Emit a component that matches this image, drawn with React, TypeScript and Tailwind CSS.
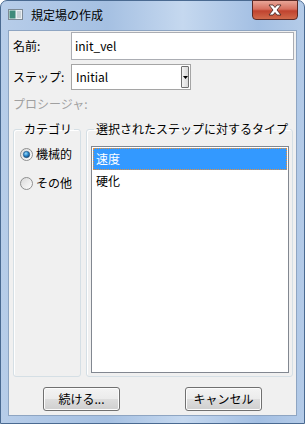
import React from 'react'

const font = "font-['Noto_Sans_CJK_JP','Noto_Sans',sans-serif]"

function Radio ({ checked }: { checked?: boolean }) {
  return (
    <svg width="13" height="13" viewBox="0 0 13 13">
      <defs>
        <linearGradient id="rf" x1="0" y1="0" x2="1" y2="1">
          <stop offset="0" stopColor="#d8d8d8" />
          <stop offset="1" stopColor="#ffffff" />
        </linearGradient>
        <radialGradient id="rd" cx="0.4" cy="0.35" r="0.7">
          <stop offset="0" stopColor="#9fdcf7" />
          <stop offset="0.5" stopColor="#2a8ad0" />
          <stop offset="1" stopColor="#0f3e6a" />
        </radialGradient>
      </defs>
      <circle cx="6.5" cy="6.5" r="6" fill="url(#rf)" stroke="#8e8f8f" />
      {checked && <circle cx="6.5" cy="6.5" r="3.2" fill="url(#rd)" stroke="#244f7a" strokeWidth="0.6" />}
    </svg>
  )
}

function WinButton ({ label }: { label: string }) {
  return (
    <button className="w-[77px] h-[24px] rounded-[3px] border border-[#707070] bg-[linear-gradient(to_bottom,#f3f3f3_0%,#ebebeb_50%,#dddddd_51%,#cfcfcf_100%)] shadow-[inset_0_0_0_1px_#fcfcfc] text-[12px] leading-[16px] text-black">
      {label}
    </button>
  )
}

export default function App () {
  return (
    <div className={`w-[305px] h-[424px] ${font} text-[12px] leading-[16px] text-black`}>
      <div className="flex flex-col h-[424px] rounded-t-[7px] border border-[#4a6a91] bg-[linear-gradient(to_right,#b7cde9_0%,#a5c0e2_35%,#c5d8ef_60%,#a3bfe3_85%,#b4cbe8_100%)]">
        {/* title bar */}
        <div className="relative flex items-center h-[29px] pl-[7px]">
          <svg width="15" height="11" viewBox="0 0 15 11" className="mt-[-2px]">
            <rect x="0.5" y="0.5" width="14" height="10" fill="#e9eef2" stroke="#7d8a96" />
            <rect x="1.5" y="1.5" width="6" height="8" fill="#3f8b7a" />
            <rect x="9" y="2" width="4" height="7" fill="#c9d2d8" />
          </svg>
          <span className="ml-[8px] mt-[-2px] text-[12px]">規定場の作成</span>
          <div className="absolute top-[-1px] right-[6px] w-[46px] h-[20px] rounded-b-[4px] border border-[#5b2a26] bg-[linear-gradient(to_bottom,#e8a597_0%,#d6705f_45%,#c0432f_55%,#d06a4b_100%)] flex items-center justify-center">
            <svg width="14" height="12" viewBox="0 0 14 12">
              <path d="M1 1 L5 1 L7 3.5 L9 1 L13 1 L9 6 L13 11 L9 11 L7 8.5 L5 11 L1 11 L5 6 Z" fill="#ffffff" stroke="#3b1e1a" strokeWidth="0.8" strokeLinejoin="round" />
            </svg>
          </div>
        </div>

        {/* client area */}
        <div className="mx-[7px] h-[386px] border border-[#8ea5c2] bg-[#f0f0f0] pl-[4px] pt-[1px]">
          <div className="flex items-center h-[28px]">
            <span className="w-[58px]">名前:</span>
            <div className="w-[223px] h-[28px] border border-[#abadb3] bg-white flex items-center pl-[3px]">init_vel</div>
          </div>
          <div className="flex items-center h-[26px] mt-[4px]">
            <span className="w-[58px]">ステップ:</span>
            <div className="w-[120px] h-[26px] border border-[#a5a5a5] bg-white flex items-center justify-between pl-[4px] pr-[1px]">
              <span>Initial</span>
              <div className="w-[8px] h-[22px] border border-[#6f6f6f] rounded-[1px] bg-[linear-gradient(to_right,#f4f4f4,#d9d9d9)] flex items-center justify-center">
                <svg width="5" height="3" viewBox="0 0 5 3"><path d="M0 0 L5 0 L2.5 3 Z" fill="#000" /></svg>
              </div>
            </div>
          </div>
          <div className="mt-[6px] h-[16px] text-[#a0a0a0]">プロシージャ:</div>

          <div className="flex gap-[5px] mt-[9px]">
            <fieldset className="w-[68px] h-[256px] border border-[#d5dfe5] rounded-[3px] shadow-[inset_1px_1px_0_#ffffff]">
              <legend className="ml-[8px] px-[2px] leading-[16px]">カテゴリ</legend>
              <div className="flex items-center h-[16px] mt-[9px] ml-[6px]">
                <Radio checked />
                <span className="ml-[3px]">機械的</span>
              </div>
              <div className="flex items-center h-[16px] mt-[13px] ml-[6px]">
                <Radio />
                <span className="ml-[3px]">その他</span>
              </div>
            </fieldset>
            <fieldset className="w-[207px] h-[256px] border border-[#d5dfe5] rounded-[3px] shadow-[inset_1px_1px_0_#ffffff]">
              <legend className="ml-[7px] px-[2px] leading-[16px]">選択されたステップに対するタイプ</legend>
              <div className="ml-[4px] mt-[9px] w-[198px] h-[227px] border border-[#828790] bg-white p-[1px]">
                <div className="h-[22px] bg-[#3399ff] border border-dotted border-[#e8913a] text-white flex items-center pl-[2px]">速度</div>
                <div className="h-[22px] flex items-center pl-[3px]">硬化</div>
              </div>
            </fieldset>
          </div>

          <div className="flex mt-[10px] pl-[30px] gap-[65px]">
            <WinButton label="続ける..." />
            <WinButton label="キャンセル" />
          </div>
        </div>
      </div>
    </div>
  )
}
